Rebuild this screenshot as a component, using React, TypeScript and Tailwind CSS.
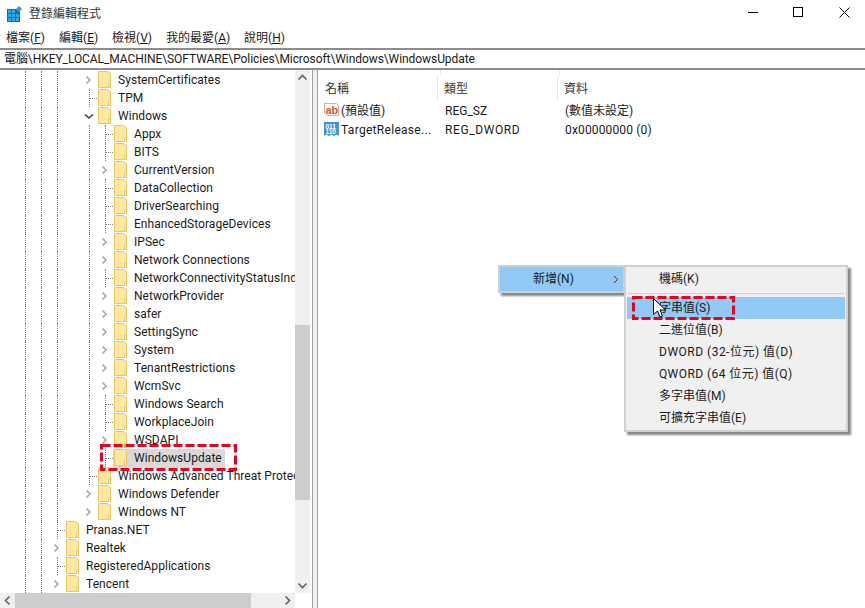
import React from "react"

const FONT = "[font-family:'Roboto','Noto_Sans_CJK_TC',sans-serif]"

// kind: "g" dotted guide, "n" blank, ">" collapsed, "v" open, "-" branch
type Row = { text: string; cells: string; selected?: boolean }

const rows: Row[] = [
  { text: "SystemCertificates", cells: "gggn>" },
  { text: "TPM", cells: "gggn-" },
  { text: "Windows", cells: "gggnv" },
  { text: "Appx", cells: "gggng-" },
  { text: "BITS", cells: "gggng-" },
  { text: "CurrentVersion", cells: "gggng>" },
  { text: "DataCollection", cells: "gggng-" },
  { text: "DriverSearching", cells: "gggng-" },
  { text: "EnhancedStorageDevices", cells: "gggng-" },
  { text: "IPSec", cells: "gggng>" },
  { text: "Network Connections", cells: "gggng>" },
  { text: "NetworkConnectivityStatusInd", cells: "gggng-" },
  { text: "NetworkProvider", cells: "gggng>" },
  { text: "safer", cells: "gggng>" },
  { text: "SettingSync", cells: "gggng>" },
  { text: "System", cells: "gggng>" },
  { text: "TenantRestrictions", cells: "gggng>" },
  { text: "WcmSvc", cells: "gggng>" },
  { text: "Windows Search", cells: "gggng-" },
  { text: "WorkplaceJoin", cells: "gggng-" },
  { text: "WSDAPI", cells: "gggng>" },
  { text: "WindowsUpdate", cells: "gggng-", selected: true },
  { text: "Windows Advanced Threat Protection", cells: "gggn-" },
  { text: "Windows Defender", cells: "gggn>" },
  { text: "Windows NT", cells: "gggn>" },
  { text: "Pranas.NET", cells: "gg-" },
  { text: "Realtek", cells: "gg>" },
  { text: "RegisteredApplications", cells: "gg-" },
  { text: "Tencent", cells: "gg>" },
]

const Folder = () => (
  <svg width="14" height="18" viewBox="0 0 14 18" className="absolute left-0 top-0">
    <path d="M.5.5h9l3 2v14H.5z" fill="#fde8a0" stroke="#ecc85c" />
    <path d="M10.500 16.500v-4h2v4z" fill="#fdf3c8" stroke="#ecc85c" />
  </svg>
)

const TreeCell = ({ kind }: { kind: string }) => (
  <div className="relative h-[18px] w-4 shrink-0">
    {(kind === "g" || kind === "-") && (
      <div className="absolute left-2 top-0 h-full border-l border-dotted border-[#808080]" />
    )}
    {kind === "-" && (
      <div className="absolute left-2 top-[9px] w-2 border-t border-dotted border-[#808080]" />
    )}
    {kind === ">" && (
      <svg width="16" height="18" viewBox="0 0 16 18" className="absolute left-0 top-0">
        <path d="M5.500 5.500L9 9l-3.500 3.500" fill="none" stroke="#a6a6a6" strokeWidth="1.600" />
      </svg>
    )}
    {kind === "v" && (
      <svg width="16" height="18" viewBox="0 0 16 18" className="absolute left-0 top-0">
        <path d="M4 7.500l4 3.500 4-3.500" fill="none" stroke="#404040" strokeWidth="1.600" />
      </svg>
    )}
  </div>
)

const TreeRow = ({ row }: { row: Row }) => (
  <div className="flex h-[18px] items-center pl-[17px]">
    {row.cells.split("").map((c, i) => (
      <TreeCell key={i} kind={c} />
    ))}
    <div className={row.selected ? "flex h-[19px] items-center bg-[#d9d9d9] pr-[3px]" : "flex items-center"}>
      <div className="relative -ml-[1px] mr-[5px] h-[18px] w-[17px] shrink-0 pl-[2px]">
        <div className="absolute left-[2px] top-0">
          <Folder />
        </div>
      </div>
      <span className="whitespace-nowrap text-[12px] leading-[18px] tracking-[0.05px] text-[#1a1a1a]">{row.text}</span>
    </div>
  </div>
)

const ScrollArrow = ({ d }: { d: string }) => (
  <svg width="15" height="15" viewBox="0 0 15 15" className="shrink-0">
    <path d={d} fill="none" stroke="#606060" strokeWidth="1.600" />
  </svg>
)

const Menu = ({ label, hot }: { label: string; hot: string }) => (
  <span className="whitespace-nowrap">
    {label}(<span className="underline">{hot}</span>)
  </span>
)

const Callout = ({ className, w, h }: { className: string; w: number; h: number }) => (
  <svg width={w} height={h} viewBox={`0 0 ${w} ${h}`} className={`absolute ${className}`}>
    <rect x="1.500" y="1.500" width={w - 3} height={h - 3} fill="none" stroke="#e8001c" strokeWidth="3" strokeDasharray="9 3" />
  </svg>
)

const subItems = [
  { text: "二進位值(B)", cls: "" },
  { text: "DWORD (32-位元) 值(D)", cls: "tracking-[0.5px]" },
  { text: "QWORD (64 位元) 值(Q)", cls: "tracking-[0.45px]" },
  { text: "多字串值(M)", cls: "" },
  { text: "可擴充字串值(E)", cls: "" },
]

export default function App() {
  return (
    <div className={`relative flex h-[608px] w-[865px] flex-col overflow-hidden bg-white text-[#1a1a1a] ${FONT}`}>
      {/* title bar */}
      <div className="flex h-[29px] items-center pb-[2px] pl-[7px]">
        <svg width="15" height="16" viewBox="0 0 15 16" className="mr-[7px] shrink-0">
          <path d="M0 3h13v13H0z" fill="#0f6fb0" />
          <path d="M1 4h3v3H1zM5 4h3v3H5zM1 8h3v3H1zM5 8h3v3H5zM9 8h3v3H9zM1 12h3v3H1zM5 12h3v3H5zM9 12h3v3H9z" fill="#2fa8e6" />
          <path d="M12 0l3 3-3 3-3-3z" fill="#3f9ad6" />
        </svg>
        <span className="text-[12px] text-[#333]">登錄編輯程式</span>
        <div className="mb-[3px] ml-auto flex items-center">
          <div className="mr-[35px] h-px w-[10px] bg-black" />
          <div className="mr-[36px] h-[10px] w-[10px] border border-black" />
          <svg width="11" height="11" viewBox="0 0 11 11" className="mr-[15px]">
            <path d="M.5.5l10 10M10.500.5l-10 10" stroke="#000" fill="none" />
          </svg>
        </div>
      </div>

      {/* menu bar */}
      <div className="flex h-[19px] items-center bg-white pb-[2px] pl-[6px] text-[12px]">
        <div className="w-[53px]"><Menu label="檔案" hot="F" /></div>
        <div className="w-[53px]"><Menu label="編輯" hot="E" /></div>
        <div className="w-[54px]"><Menu label="檢視" hot="V" /></div>
        <div className="w-[78px]"><Menu label="我的最愛" hot="A" /></div>
        <div><Menu label="說明" hot="H" /></div>
      </div>

      {/* address bar */}
      <div className="flex h-[22px] items-center whitespace-nowrap border-y-2 border-y-[#8c8c8c] pl-[4px] text-[12px] tracking-[-0.07px]">
        電腦\HKEY_LOCAL_MACHINE\SOFTWARE\Policies\Microsoft\Windows\WindowsUpdate
      </div>

      <div className="flex min-h-0 flex-1">
        {/* tree pane */}
        <div className="flex w-[312px] shrink-0 flex-col">
          <div className="flex min-h-0 flex-1">
            <div className="w-[295px] overflow-hidden pt-[1px]">
              {rows.map((r) => (
                <TreeRow key={r.text} row={r} />
              ))}
            </div>
            <div className="flex w-[15px] flex-col items-center bg-[#f0f0f0]">
              <ScrollArrow d="M3.500 9.500l4-4 4 4" />
              <div className="mt-[240px] h-[175px] w-full bg-[#cdcdcd]" />
              <div className="flex-1" />
              <ScrollArrow d="M3.500 5.500l4 4 4-4" />
            </div>
          </div>
          <div className="flex h-[15px] w-[295px] bg-[#f0f0f0]">
            <ScrollArrow d="M9.500 3.500l-4 4 4 4" />
            <div className="h-full w-[236px] bg-[#cdcdcd]" />
            <div className="flex-1" />
            <ScrollArrow d="M5.500 3.500l4 4-4 4" />
          </div>
        </div>

        {/* splitter */}
        <div className="h-full w-[6px] shrink-0 border-x border-x-[#a0a0a0] bg-[#f0f0f0]" />

        {/* value list */}
        <div className="min-w-0 flex-1 text-[12px]">
          <div className="flex h-[6px]">
            <div className="w-[123px] border-r border-[#eaeaea]" />
            <div className="w-[119px] border-r border-[#eaeaea]" />
          </div>
          <div className="flex h-[25px]">
            <div className="h-[24px] w-[120px] border-r border-[#e5e5e5] pl-[7px] leading-[27px] text-[#333]">名稱</div>
            <div className="h-[24px] w-[120px] border-r border-[#e5e5e5] pl-[6px] leading-[27px] text-[#333]">類型</div>
            <div className="h-[24px] pl-[6px] leading-[27px] text-[#333]">資料</div>
          </div>
          <div className="flex h-[19px] items-center">
            <div className="flex w-[120px] items-center pl-[5px]">
              <svg width="17" height="17" viewBox="0 0 17 17" className="mr-px shrink-0">
                <path d="M1.500 1.500h12l2 2v10h-12l-2-2z" fill="#fff" stroke="#d8b0a0" />
                <text x="2.500" y="11.500" fontSize="11" fontWeight="700" fill="#d8502c" fontFamily="Liberation Sans">ab</text>
              </svg>
              <span>(預設值)</span>
            </div>
            <div className="w-[120px] pl-[7px]">REG_SZ</div>
            <div className="pl-[7px]">(數值未設定)</div>
          </div>
          <div className="flex h-[19px] items-center">
            <div className="flex w-[120px] items-center pl-[5px]">
              <svg width="17" height="17" viewBox="0 0 17 17" className="mr-px shrink-0">
                <path d="M1 1h15v14l-2.500-1.500L11 15l-2.500-1.500L6 15l-2.500-1.500L1 15z" fill="#4a90d9" />
                <text x="2.500" y="7.500" fontSize="6.500" fontWeight="700" fill="#fff" fontFamily="Liberation Sans">011</text>
                <text x="2.500" y="13" fontSize="6.500" fontWeight="700" fill="#fff" fontFamily="Liberation Sans">110</text>
              </svg>
              <span className="w-[96px] truncate tracking-[0.3px]">TargetRelease...</span>
            </div>
            <div className="w-[120px] pl-[7px] tracking-[0.6px]">REG_DWORD</div>
            <div className="pl-[7px] tracking-[0.15px]">0x00000000 (0)</div>
          </div>
        </div>
      </div>

      {/* context menu */}
      <div className="absolute left-[498px] top-[265px] h-[28px] w-[127px] border-2 border-[#d0d0d0] bg-[#f0f0f0] shadow-[3px_3px_2px_#888]">
        <div className="flex h-[24px] items-center justify-between bg-[#91c9f7] pl-[33px] pr-[3px] text-[12px]">
          <span>新增(N)</span>
          <svg width="8" height="9" viewBox="0 0 8 9">
            <path d="M2 1l3.500 3.500L2 8" fill="none" stroke="#333" />
          </svg>
        </div>
      </div>
      <div className="absolute left-[624px] top-[265px] h-[167px] w-[224px] border-2 border-[#d0d0d0] bg-[#f0f0f0] pt-px text-[12px] shadow-[3px_3px_2px_#888]">
        <div className="flex h-[22px] items-center pl-[33px]">機碼(K)</div>
        <div className="mx-[2px] my-[3px] h-px bg-[#d0d0d0]" />
        <div className="mx-px flex h-[22px] items-center bg-[#91c9f7] pl-[32px]">字串值(S)</div>
        {subItems.map((s) => (
          <div key={s.text} className={`flex h-[22px] items-center whitespace-pre pl-[33px] ${s.cls}`}>{s.text}</div>
        ))}
      </div>

      {/* callouts */}
      <Callout className="left-[100px] top-[444px]" w={137} h={27} />
      <Callout className="left-[632px] top-[296px]" w={103} h={24} />

      {/* mouse pointer */}
      <svg width="14" height="21" viewBox="0 0 14 21" className="absolute left-[653px] top-[298px]">
        <path d="M.5.500v16l4-3.500 2.500 6 2.500-1-2.500-6h5.500z" fill="#fff" stroke="#000" />
      </svg>
    </div>
  )
}
